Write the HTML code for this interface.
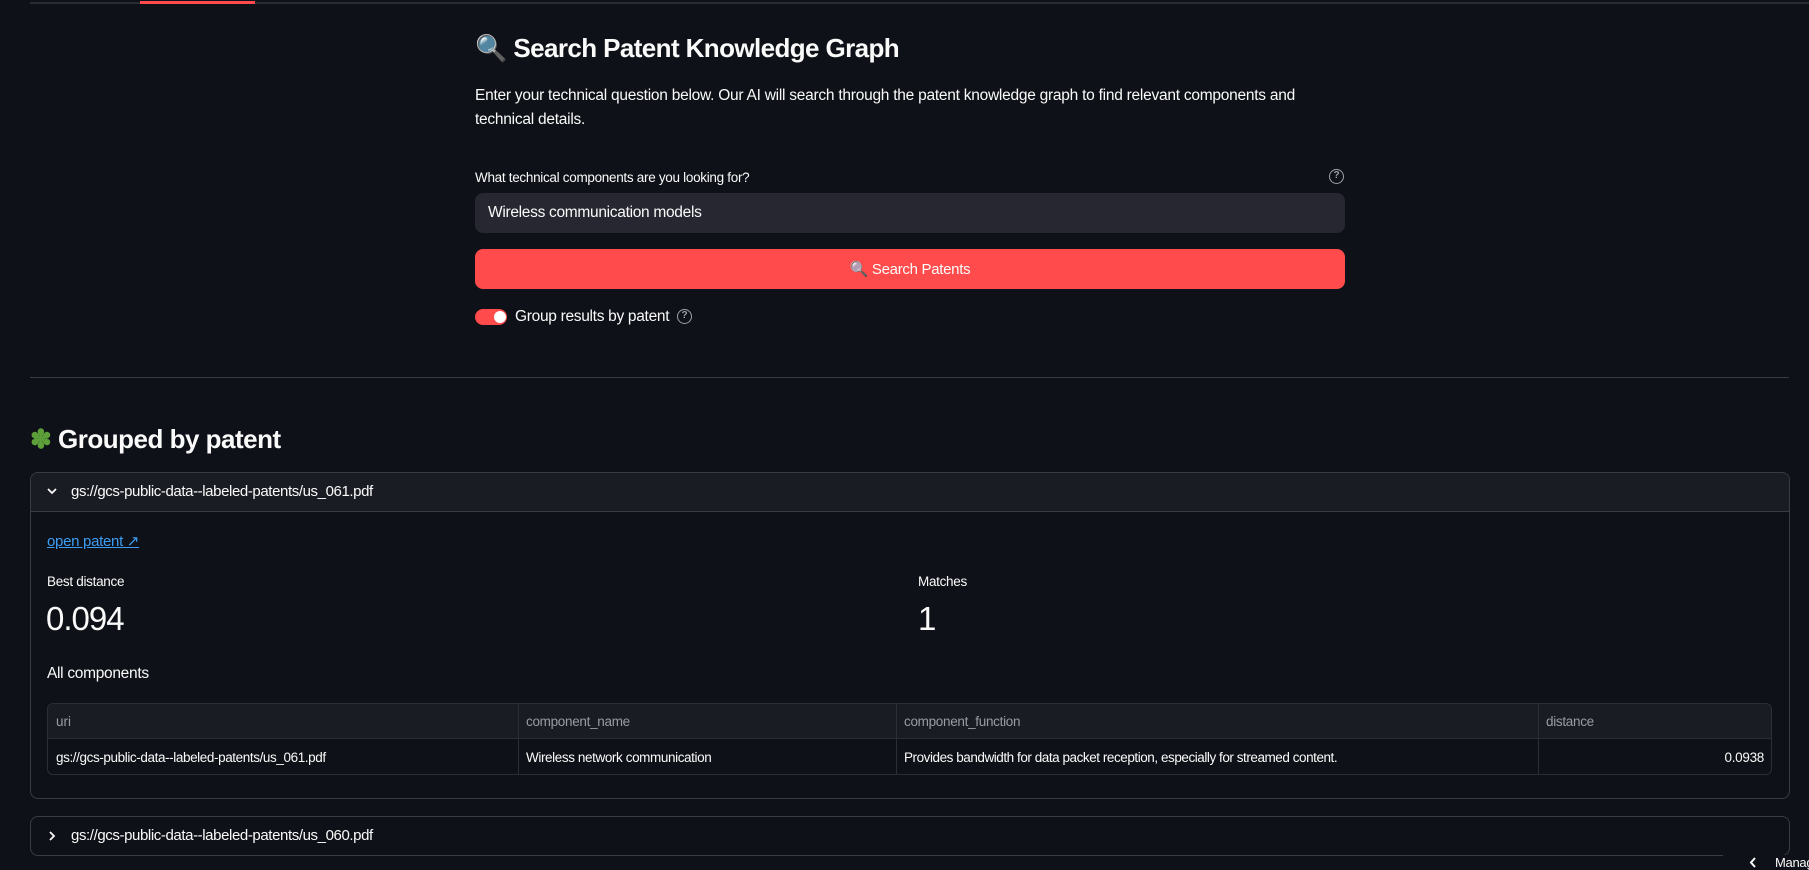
<!DOCTYPE html>
<html><head><meta charset="utf-8"><style>
*{box-sizing:border-box;margin:0;padding:0}
body{width:1809px;height:869px;overflow:hidden;background:#0e1117;color:#fafafa;font-family:"Liberation Sans",sans-serif;position:relative}
.a{position:absolute}
.t{white-space:nowrap}
.help{position:absolute;width:15px;height:15px;border:1.5px solid #a0a0a8;border-radius:50%;color:#a0a0a8;font-size:10px;line-height:12px;text-align:center;font-weight:bold}
</style></head><body>
<div class="a" style="left:30px;top:2px;width:1779px;height:2px;background:#2a2c33"></div>
<div class="a" style="left:140px;top:1px;width:115px;height:3px;background:#ff4b4b"></div>

<div class="a t" style="left:475px;top:33px;font-size:26px;font-weight:bold;letter-spacing:-0.6px">🔍 Search Patent Knowledge Graph</div>
<div class="a" style="left:475px;top:84px;width:870px;font-size:15.5px;line-height:24px;letter-spacing:-0.25px">Enter your technical question below. Our AI will search through the patent knowledge graph to find relevant components and technical details.</div>
<div class="a t" style="left:475px;top:170px;font-size:13.5px;letter-spacing:-0.3px">What technical components are you looking for?</div>
<div class="help" style="left:1329px;top:169px">?</div>
<div class="a" style="left:475px;top:193px;width:870px;height:40px;background:#262730;border-radius:8px"></div>
<div class="a t" style="left:488px;top:204px;font-size:15.5px;letter-spacing:-0.3px">Wireless communication models</div>
<div class="a" style="left:475px;top:249px;width:870px;height:40px;background:#ff4b4b;border-radius:8px;text-align:center;line-height:41px;font-size:15px;letter-spacing:-0.3px">🔍 Search Patents</div>
<div class="a" style="left:475px;top:309px;width:32px;height:16px;background:#ff4b4b;border-radius:8px"></div>
<div class="a" style="left:494px;top:311px;width:12px;height:12px;background:#fff;border-radius:50%"></div>
<div class="a t" style="left:515px;top:308px;font-size:15.5px;letter-spacing:-0.3px">Group results by patent</div>
<div class="help" style="left:677px;top:309px">?</div>

<div class="a" style="left:30px;top:377px;width:1759px;height:1px;background:#3a3c44"></div>

<div class="a t" style="left:30px;top:424px;font-size:26px;font-weight:bold;letter-spacing:-0.5px"><span style="color:#5da03a">✽</span> Grouped by patent</div>

<div class="a" style="left:30px;top:472px;width:1760px;height:327px;border:1px solid #3a3c44;border-radius:8px;overflow:hidden">
 <div style="height:39px;background:#1a1c23;border-bottom:1px solid #3a3c44"></div>
</div>
<svg class="a" style="left:46px;top:486px" width="12" height="10" viewBox="0 0 12 10"><path d="M2 3 L6 7 L10 3" stroke="#fafafa" stroke-width="1.8" fill="none"/></svg>
<div class="a t" style="left:71px;top:483px;font-size:15px;letter-spacing:-0.4px">gs://gcs-public-data--labeled-patents/us_061.pdf</div>
<div class="a t" style="left:47px;top:532px;font-size:15px;color:#3d9df3;text-decoration:underline;letter-spacing:-0.3px">open patent ↗</div>
<div class="a t" style="left:47px;top:574px;font-size:13.5px;letter-spacing:-0.3px">Best distance</div>
<div class="a t" style="left:46px;top:600px;font-size:33px;font-weight:300;letter-spacing:-1px">0.094</div>
<div class="a t" style="left:918px;top:574px;font-size:13.5px;letter-spacing:-0.3px">Matches</div>
<div class="a t" style="left:918px;top:600px;font-size:33px;font-weight:300">1</div>
<div class="a t" style="left:47px;top:665px;font-size:15.5px;letter-spacing:-0.3px">All components</div>

<div class="a" style="left:47px;top:703px;width:1725px;height:72px;border:1px solid #2c2e36;border-radius:6px;overflow:hidden">
 <div style="height:35px;background:#1a1c23;border-bottom:1px solid #2c2e36"></div>
</div>
<div class="a" style="left:518px;top:703px;width:1px;height:72px;background:#2c2e36"></div>
<div class="a" style="left:896px;top:703px;width:1px;height:72px;background:#2c2e36"></div>
<div class="a" style="left:1538px;top:703px;width:1px;height:72px;background:#2c2e36"></div>
<div class="a t" style="left:56px;top:714px;font-size:13.5px;color:#9a9ca4">uri</div>
<div class="a t" style="left:526px;top:714px;font-size:13.5px;color:#9a9ca4;letter-spacing:-0.3px">component_name</div>
<div class="a t" style="left:904px;top:714px;font-size:13.5px;color:#9a9ca4;letter-spacing:-0.3px">component_function</div>
<div class="a t" style="left:1546px;top:714px;font-size:13.5px;color:#9a9ca4;letter-spacing:-0.3px">distance</div>
<div class="a t" style="left:56px;top:750px;font-size:13.5px;letter-spacing:-0.4px">gs://gcs-public-data--labeled-patents/us_061.pdf</div>
<div class="a t" style="left:526px;top:750px;font-size:13.5px;letter-spacing:-0.4px">Wireless network communication</div>
<div class="a t" style="left:904px;top:750px;font-size:13.5px;letter-spacing:-0.45px">Provides bandwidth for data packet reception, especially for streamed content.</div>
<div class="a t" style="left:1700px;top:750px;width:64px;text-align:right;font-size:13.5px;letter-spacing:-0.3px">0.0938</div>

<div class="a" style="left:30px;top:816px;width:1760px;height:40px;border:1px solid #3a3c44;border-radius:8px"></div>
<svg class="a" style="left:47px;top:830px" width="10" height="12" viewBox="0 0 10 12"><path d="M3 2 L7 6 L3 10" stroke="#fafafa" stroke-width="1.8" fill="none"/></svg>
<div class="a t" style="left:71px;top:827px;font-size:15px;letter-spacing:-0.4px">gs://gcs-public-data--labeled-patents/us_060.pdf</div>
<div class="a" style="left:1723px;top:855px;width:86px;height:14px;background:#0e1117"></div>
<svg class="a" style="left:1748px;top:856px" width="10" height="13" viewBox="0 0 10 13"><path d="M7 2 L3 6.5 L7 11" stroke="#fafafa" stroke-width="2" fill="none"/></svg>
<div class="a t" style="left:1775px;top:855px;font-size:13px;letter-spacing:-0.3px">Manage app</div>
</body></html>
